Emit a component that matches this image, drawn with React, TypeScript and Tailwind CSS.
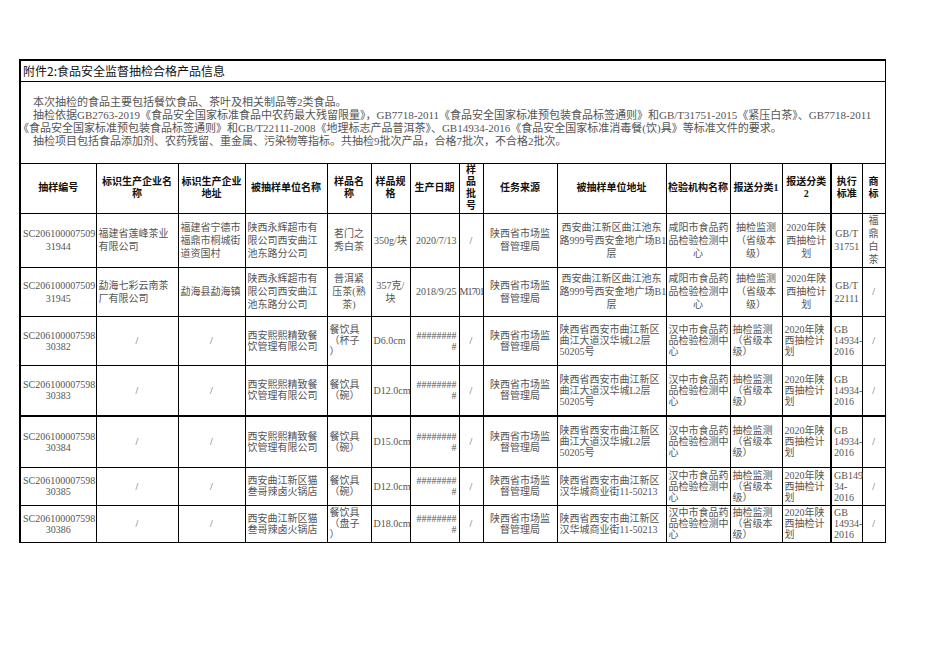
type Align = "l" | "c" | "r";
type Cell = [Align, string[], string?];

type Row = {
  h: string;
  lead: string;
  thickBottom?: boolean;
  cells: Cell[];
};

const colWidths = [
  "w-[76px]",
  "w-[82px]",
  "w-[67px]",
  "w-[82px]",
  "w-[44px]",
  "w-[39px]",
  "w-[49px]",
  "w-[24px]",
  "w-[74px]",
  "w-[109px]",
  "w-[64px]",
  "w-[52px]",
  "w-[49px]",
  "w-[31px]",
  "w-[23px]",
];

const headers: string[][] = [
  ["抽样编号"],
  ["标识生产企业名", "称"],
  ["标识生产企业", "地址"],
  ["被抽样单位名称"],
  ["样品名", "称"],
  ["样品规", "格"],
  ["生产日期"],
  ["样", "品", "批", "号"],
  ["任务来源"],
  ["被抽样单位地址"],
  ["检验机构名称"],
  ["报送分类1"],
  ["报送分类", "2"],
  ["执行", "标准"],
  ["商", "标"],
];

const shop1 = ["陕西永辉超市有", "限公司西安曲江", "池东路分公司"];
const addr1 = ["西安曲江新区曲江池东", "路999号西安金地广场B1", "层"];
const lab1 = ["咸阳市食品药", "品检验检测中", "心"];
const lab2 = ["汉中市食品药", "品检验检测中", "心"];
const bureau = ["陕西省市场监", "督管理局"];
const cls = ["抽检监测", "（省级本", "级）"];
const plan = ["2020年陕", "西抽检计", "划"];
const hash = ["########", "#"];
const shop2 = ["西安熙熙精致餐", "饮管理有限公司"];
const shop3 = ["西安曲江新区猫", "叁哥辣卤火锅店"];
const addr2 = ["陕西省西安市曲江新区", "曲江大道汉华城L2层", "50205号"];
const addr3 = ["陕西省西安市曲江新区", "汉华城商业街11-50213"];
const std = ["GB", "14934-", "2016"];

const tableware = (
  id: string,
  shop: string[],
  item: string[],
  size: string,
  addr: string[],
  standard: string[]
): Cell[] => [
  ["c", ["SC206100007598", id]],
  ["c", ["/"]],
  ["c", ["/"]],
  ["l", shop],
  ["l", item],
  ["l", [size]],
  ["r", hash],
  ["c", ["/"]],
  ["c", bureau],
  ["l", addr],
  ["l", lab2],
  ["l", cls],
  ["l", plan],
  ["l", standard],
  ["c", ["/"]],
];

const rows: Row[] = [
  {
    h: "h-[54px]",
    lead: "leading-[13px]",
    cells: [
      ["c", ["SC206100007509", "31944"]],
      ["l", ["福建省莲峰茶业", "有限公司"]],
      ["l", ["福建省宁德市", "福鼎市桐城街", "道资国村"]],
      ["l", shop1],
      ["c", ["茗门之", "秀白茶"]],
      ["c", ["350g/块"]],
      ["r", ["2020/7/13"]],
      ["c", ["/"]],
      ["c", bureau],
      ["c", addr1],
      ["c", lab1],
      ["c", cls],
      ["c", plan],
      ["c", ["GB/T", "31751"]],
      ["c", ["福", "鼎", "白", "茶"]],
    ],
  },
  {
    h: "h-[49px]",
    lead: "leading-[13px]",
    cells: [
      ["c", ["SC206100007509", "31945"]],
      ["l", ["勐海七彩云南茶", "厂有限公司"]],
      ["l", ["勐海县勐海镇"]],
      ["l", shop1],
      ["c", ["普洱紧", "压茶(熟", "茶)"]],
      ["c", ["357克/", "块"]],
      ["r", ["2018/9/25"]],
      ["l", ["M1701"], "!px-0 tracking-[-1px]"],
      ["c", bureau],
      ["c", addr1],
      ["c", lab1],
      ["c", cls],
      ["c", plan],
      ["c", ["GB/T", "22111"]],
      ["c", ["/"]],
    ],
  },
  {
    h: "h-[49px]",
    lead: "leading-[11px]",
    cells: tableware("30382", shop2, ["餐饮具", "（杯子", "）"], "D6.0cm", addr2, std),
  },
  {
    h: "h-[51px]",
    lead: "leading-[11px]",
    thickBottom: true,
    cells: tableware("30383", shop2, ["餐饮具", "（碗）"], "D12.0cm", addr2, std),
  },
  {
    h: "h-[51px]",
    lead: "leading-[11px]",
    cells: tableware("30384", shop2, ["餐饮具", "（碗）"], "D15.0cm", addr2, std),
  },
  {
    h: "h-[38px]",
    lead: "leading-[11px]",
    cells: tableware("30385", shop3, ["餐饮具", "（碗）"], "D12.0cm", addr3, ["GB149", "34-", "2016"]),
  },
  {
    h: "h-[37px]",
    lead: "leading-[11px]",
    cells: tableware("30386", shop3, ["餐饮具", "（盘子", "）"], "D18.0cm", addr3, std),
  },
];

const alignClass = (a: Align) =>
  a === "l" ? "text-left" : a === "r" ? "text-right" : "text-center";

const edgeClass = (i: number) =>
  i === 0 ? " border-l-2" : i === 12 ? " border-r-2" : "";

const Lines = ({ lines }: { lines: string[] }) => (
  <>
    {lines.map((t, k) => (
      <div key={k} className="whitespace-nowrap">
        {t}
      </div>
    ))}
  </>
);

export default function App() {
  return (
    <div className="min-h-[662px] w-[936px] bg-white pl-[19px] pt-[59px] font-['Liberation_Serif','Noto_Sans_CJK_SC',serif] text-[#555]">
      <table className="w-[866px] table-fixed border-collapse">
        <colgroup>
          {colWidths.map((w, i) => (
            <col key={i} className={w} />
          ))}
        </colgroup>
        <tbody>
          <tr className="h-[21px]">
            <td
              colSpan={15}
              className="border border-t-2 border-l-2 border-black px-[2px] align-middle font-['Noto_Sans_CJK_SC',sans-serif] text-[12px] leading-[14px] text-[#111]"
            >
              附件2:食品安全监督抽检合格产品信息
            </td>
          </tr>
          <tr className="h-[82px]">
            <td
              colSpan={15}
              className="border border-l-2 border-black p-0 align-middle text-[11px] leading-[13px]"
            >
              <div className="whitespace-nowrap pl-[12px]">
                本次抽检的食品主要包括餐饮食品、茶叶及相关制品等2类食品。
              </div>
              <div className="whitespace-nowrap pl-[12px]">
                抽检依据GB2763-2019《食品安全国家标准食品中农药最大残留限量》，GB7718-2011《食品安全国家标准预包装食品标签通则》和GB/T31751-2015《紧压白茶》、GB7718-2011
              </div>
              <div className="-ml-[3px] whitespace-nowrap">
                《食品安全国家标准预包装食品标签通则》和GB/T22111-2008《地理标志产品普洱茶》、GB14934-2016《食品安全国家标准消毒餐(饮)具》等标准文件的要求。
              </div>
              <div className="whitespace-nowrap pl-[12px]">
                抽检项目包括食品添加剂、农药残留、重金属、污染物等指标。共抽检9批次产品，合格7批次，不合格2批次。
              </div>
            </td>
          </tr>
          <tr className="h-[50px]">
            {headers.map((lines, i) => (
              <th
                key={i}
                className={
                  "border border-black px-[1px] text-center align-middle text-[10px] font-bold leading-[12px] text-[#111]" +
                  edgeClass(i)
                }
              >
                <Lines lines={lines} />
              </th>
            ))}
          </tr>
          {rows.map((row, r) => (
            <tr key={r} className={row.h}>
              {row.cells.map(([a, lines, extra], i) => (
                <td
                  key={i}
                  className={
                    "overflow-visible border border-black px-[2px] align-middle text-[10px] " +
                    row.lead +
                    " " +
                    alignClass(a) +
                    edgeClass(i) +
                    (row.thickBottom ? " border-b-2" : "") +
                    (extra ? " " + extra : "")
                  }
                >
                  <Lines lines={lines} />
                </td>
              ))}
            </tr>
          ))}
        </tbody>
      </table>
    </div>
  );
}
